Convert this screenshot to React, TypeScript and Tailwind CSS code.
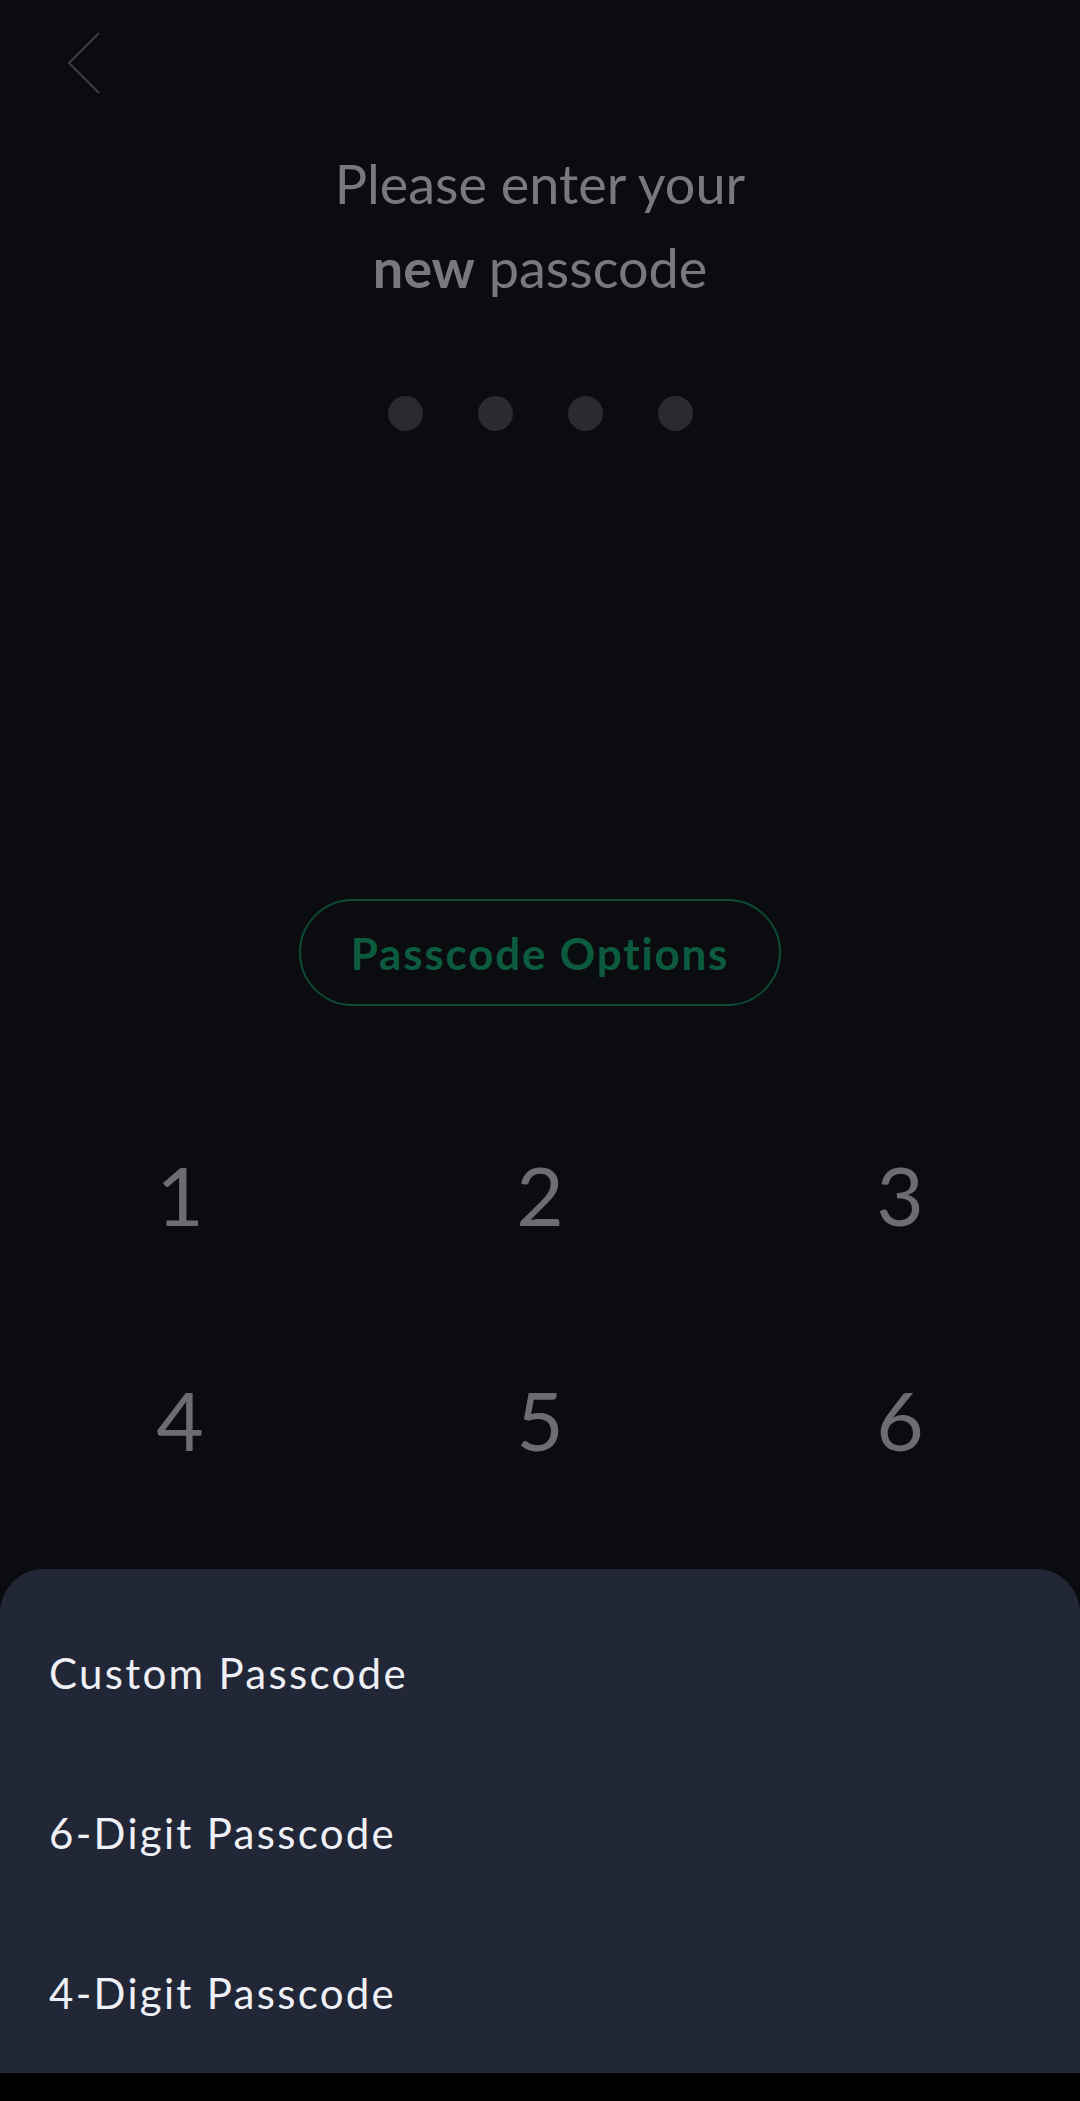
import React from "react";

const font = { fontFamily: "Lato, 'Noto Sans', sans-serif" };

export default function App() {
  const keys = ["1", "2", "3", "4", "5", "6"];
  return (
    <div
      className="relative w-[1080px] h-[2101px] overflow-hidden bg-[#0b0c10] flex flex-col"
      style={font}
    >
      <div className="h-[124px] pt-[32px] pl-[67px]">
        <svg width="34" height="62" viewBox="0 0 34 62" fill="none">
          <path d="M32 1 L2 31 L32 61" stroke="#3c3c41" strokeWidth="2.2" />
        </svg>
      </div>

      <div className="flex flex-col items-center text-[54px] leading-[84px] text-[#79797d] mt-[18px]">
        <div>Please enter your</div>
        <div>
          <span className="font-bold">new</span> passcode
        </div>
      </div>

      <div className="mt-[86px] flex justify-center gap-[55px]">
        <div className="w-[35px] h-[35px] rounded-full bg-[#2a2a2f]" />
        <div className="w-[35px] h-[35px] rounded-full bg-[#2a2a2f]" />
        <div className="w-[35px] h-[35px] rounded-full bg-[#2a2a2f]" />
        <div className="w-[35px] h-[35px] rounded-full bg-[#2a2a2f]" />
      </div>

      <div className="mt-[468px] flex justify-center">
        <div className="w-[482px] h-[107px] rounded-full border-2 border-[#0e4a34] flex items-center justify-center text-[44px] font-bold text-[#0d5b3e] tracking-[1.8px]">
          Passcode Options
        </div>
      </div>

      <div className="mt-[76px] grid grid-cols-3">
        {keys.map((k, i) => (
          <div
            key={i}
            className="h-[225px] flex items-center justify-center text-[82px] font-normal text-[#6c6c71]"
          >
            {k}
          </div>
        ))}
      </div>

      <div className="absolute left-0 right-0 bottom-0 flex flex-col">
        <div className="bg-[#212736] rounded-t-[44px] flex flex-col pt-[24px]">
          {["Custom Passcode", "6-Digit Passcode", "4-Digit Passcode"].map((t) => (
            <div
              key={t}
              className="h-[160px] shrink-0 flex items-center pl-[49px] text-[42px] tracking-[2.3px] text-[#eef0f5]"
            >
              {t}
            </div>
          ))}
        </div>
        <div className="h-[28px] bg-black" />
      </div>
    </div>
  );
}
